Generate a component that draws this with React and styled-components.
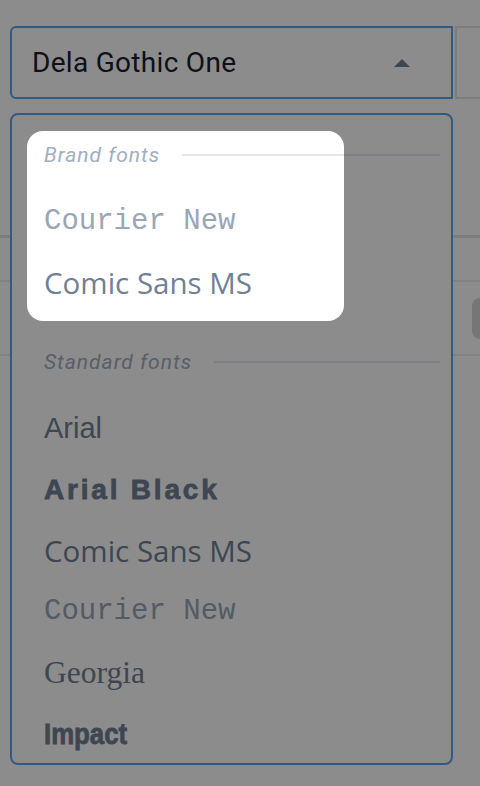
import React from "react";
import styled, { createGlobalStyle } from "styled-components";

const GlobalStyle = createGlobalStyle`
  html, body {
    margin: 0;
    padding: 0;
    background: #ffffff;
    overflow: hidden;
  }
  body {
    font-family: Roboto, "Liberation Sans", sans-serif;
  }
`;

const Page = styled.div`
  position: relative;
  width: 480px;
  height: 786px;
  overflow: hidden;
  padding-top: 26px;
  box-sizing: border-box;
`;

const Toolbar = styled.div`
  display: flex;
  gap: 2px;
  padding-left: 10px;
`;

const SelectBox = styled.div`
  width: 443px;
  height: 73px;
  box-sizing: border-box;
  border: 2px solid #5ba6ee;
  border-radius: 6px 0 0 6px;
  display: flex;
  align-items: center;
  justify-content: space-between;
  padding: 0 41px 0 20px;
  font-size: 28px;
  letter-spacing: 0.3px;
  color: #1a202c;
`;

const SideButton = styled.div`
  flex: 1;
  height: 73px;
  box-sizing: border-box;
  border: 2px solid #e2e2e2;
  border-right: none;
`;

const Rule = styled.div`
  margin-top: 136px;
  height: 3px;
  background: #e4e4e4;
`;

const Row = styled.div`
  margin-top: 42px;
  height: 72px;
  border-top: 2px solid #ececec;
  border-bottom: 2px solid #ececec;
  display: flex;
  align-items: center;
  justify-content: flex-end;
`;

const Pill = styled.div`
  width: 48px;
  height: 41px;
  margin-right: -40px;
  border-radius: 8px;
  background: #d8d8d8;
`;

const Menu = styled.div`
  position: absolute;
  top: 113px;
  left: 10px;
  width: 443px;
  height: 652px;
  box-sizing: border-box;
  border: 2px solid #5ba6ee;
  border-radius: 8px;
  background: #ffffff;
  overflow: hidden;
  padding: 16px 11px 0 0;
  display: flex;
  flex-direction: column;
  gap: 17px;
`;

const Group = styled.div`
  padding: 8px 0 8px 32px;
  display: flex;
  flex-direction: column;
`;

const GroupLabel = styled.div`
  height: 32px;
  display: flex;
  align-items: center;
  gap: 22px;
  margin-bottom: 20px;
  font-style: italic;
  font-size: 21px;
  letter-spacing: 1px;
  color: #a0aec0;
  white-space: nowrap;

  &::after {
    content: "";
    flex: 1;
    height: 2px;
    background: #e2e8f0;
  }
`;

const FontItem = styled.div`
  height: 61px;
  display: flex;
  align-items: center;
  color: ${(p) => p.$color || "#718096"};
  white-space: nowrap;
  font-family: ${(p) => p.$family};
  font-size: ${(p) => p.$size}px;
  font-weight: ${(p) => p.$weight || 400};
  letter-spacing: ${(p) => p.$spacing || 0}px;
  ${(p) => (p.$stroke ? `-webkit-text-stroke: ${p.$stroke}px #718096;` : "")}
`;

const FontName = styled.span`
  display: inline-block;
  transform-origin: left center;
  transform: scaleX(${(p) => p.$scaleX || 1});
`;

const Spotlight = styled.div`
  position: absolute;
  top: 131px;
  left: 27px;
  width: 317px;
  height: 190px;
  border-radius: 16px;
  box-shadow: 0 0 0 1400px rgba(0, 0, 0, 0.45);
  pointer-events: none;
  z-index: 2;
`;

const Caret = () => (
  <svg width="16" height="8" viewBox="0 0 16 8">
    <polygon points="0,8 8,0 16,8" fill="#718096" />
  </svg>
);

const fonts = {
  arial: { $family: `Arial, "Liberation Sans", sans-serif`, $size: 29 },
  arialBlack: {
    $family: `"Arial Black", "Liberation Sans", sans-serif`,
    $size: 28,
    $weight: 700,
    $spacing: 2.8,
    $stroke: 0.8,
  },
  comic: { $family: `"Comic Sans MS", "Open Sans", sans-serif`, $size: 29.5 },
  courier: {
    $family: `"Courier New", "Liberation Mono", monospace`,
    $size: 29,
    $color: "#98a6b6",
  },
  georgia: { $family: `Georgia, "Liberation Serif", serif`, $size: 31.5 },
  impact: {
    $family: `Impact, "Liberation Sans", sans-serif`,
    $size: 30,
    $weight: 700,
    $stroke: 0.8,
    $scaleX: 0.86,
  },
};

const brand = [
  ["Courier New", "courier"],
  ["Comic Sans MS", "comic"],
];

const standard = [
  ["Arial", "arial"],
  ["Arial Black", "arialBlack"],
  ["Comic Sans MS", "comic"],
  ["Courier New", "courier"],
  ["Georgia", "georgia"],
  ["Impact", "impact"],
];

const renderItem = ([name, key], i) => {
  const { $scaleX, ...style } = fonts[key];
  return (
    <FontItem key={i} {...style}>
      <FontName $scaleX={$scaleX}>{name}</FontName>
    </FontItem>
  );
};

const App = () => {
  return (
    <Page>
      <GlobalStyle />
      <Toolbar>
        <SelectBox>
          <span>Dela Gothic One</span>
          <Caret />
        </SelectBox>
        <SideButton />
      </Toolbar>
      <Rule />
      <Row>
        <Pill />
      </Row>

      <Menu>
        <Group>
          <GroupLabel>Brand fonts</GroupLabel>
          {brand.map(renderItem)}
        </Group>
        <Group>
          <GroupLabel>Standard fonts</GroupLabel>
          {standard.map(renderItem)}
        </Group>
      </Menu>
      <Spotlight />
    </Page>
  );
};

export default App;
